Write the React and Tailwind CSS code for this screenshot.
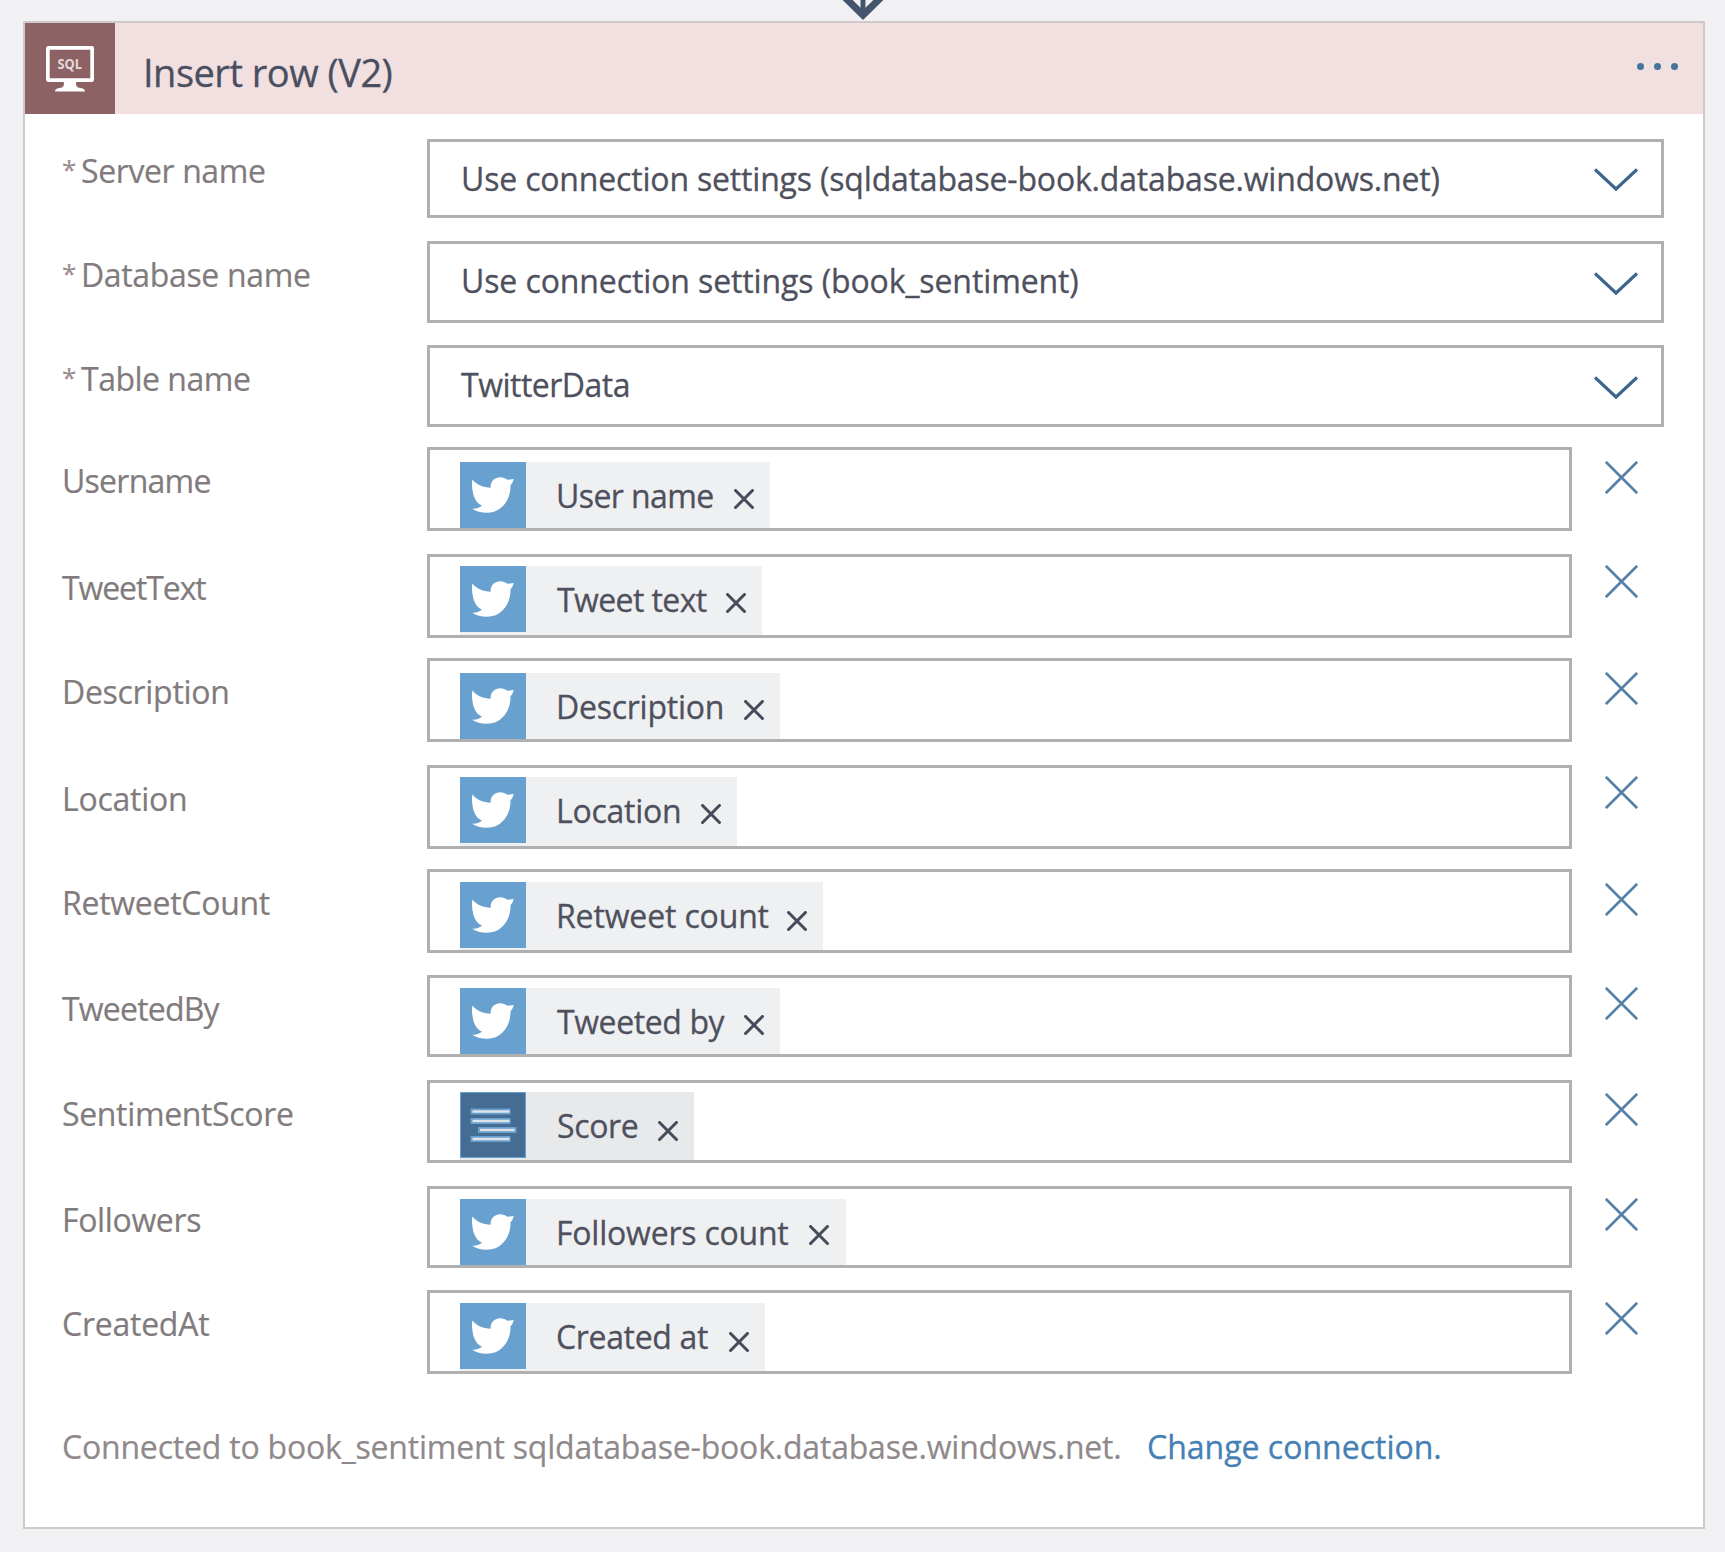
import React from "react";

const selects = [
  { label: "Server name", value: "Use connection settings (sqldatabase-book.database.windows.net)", row: "h-[79px]", labelCls: "pt-[12px] tracking-[-0.4px]", valueCls: "pt-[17px] tracking-[-0.18px]", chevron: "pt-[26px]" },
  { label: "Database name", value: "Use connection settings (book_sentiment)", row: "mt-[23px] h-[82px]", labelCls: "pt-[14px] tracking-[-0.35px]", valueCls: "pt-[17px] tracking-[-0.11px]", chevron: "pt-[28px]" },
  { label: "Table name", value: "TwitterData", row: "mt-[22px] h-[82px]", labelCls: "pt-[14px] tracking-[-0.5px]", valueCls: "pt-[17px] tracking-[-0.5px]", chevron: "pt-[28px]" },
];

const fields = [
  { label: "Username", chip: "User name", row: "mt-[20px] h-[84px]", labelCls: "tracking-[-0.75px]", chipCls: "mt-[12px] w-[310px]", text: "pl-[30px] tracking-[-0.6px]", x: "mt-[27px]", del: "mt-[14px]" },
  { label: "TweetText", chip: "Tweet text", row: "mt-[23px] h-[84px]", labelCls: "tracking-[-1.1px]", chipCls: "mt-[9px] w-[302px]", text: "pl-[31px] tracking-[-0.6px]", x: "mt-[27px]", del: "mt-[11px]" },
  { label: "Description", chip: "Description", row: "mt-[20px] h-[84px]", labelCls: "tracking-[-0.3px]", chipCls: "mt-[12px] w-[320px]", text: "pl-[30px] tracking-[-0.25px]", x: "mt-[27px]", del: "mt-[14px]" },
  { label: "Location", chip: "Location", row: "mt-[23px] h-[84px]", labelCls: "tracking-[-0.25px]", chipCls: "mt-[9px] w-[277px]", text: "pl-[30px] tracking-[-0.25px]", x: "mt-[27px]", del: "mt-[11px]" },
  { label: "RetweetCount", chip: "Retweet count", row: "mt-[20px] h-[84px]", labelCls: "tracking-[-0.28px]", chipCls: "mt-[10px] w-[363px]", text: "pl-[30px] tracking-[-0.15px]", x: "mt-[29px]", del: "mt-[14px]" },
  { label: "TweetedBy", chip: "Tweeted by", row: "mt-[22px] h-[82px]", labelCls: "tracking-[-0.8px]", chipCls: "mt-[10px] w-[320px]", text: "pl-[31px] tracking-[-0.4px]", x: "mt-[27px]", del: "mt-[12px]" },
  { label: "SentimentScore", chip: "Score", score: true, row: "mt-[23px] h-[83px]", labelCls: "tracking-[-0.35px]", chipCls: "mt-[9px] w-[234px]", text: "pl-[31px] tracking-[-0.35px]", x: "mt-[29px]", del: "mt-[13px]" },
  { label: "Followers", chip: "Followers count", row: "mt-[23px] h-[82px]", labelCls: "tracking-[-0.35px]", chipCls: "mt-[10px] w-[386px]", text: "pl-[30px] tracking-[-0.22px]", x: "mt-[26px] pr-px", del: "mt-[12px]" },
  { label: "CreatedAt", chip: "Created at", row: "mt-[22px] h-[84px]", labelCls: "tracking-[-0.25px]", chipCls: "mt-[10px] w-[305px]", text: "pl-[30px] tracking-[-0.35px]", x: "mt-[29px]", del: "mt-[12px]" },
];

function SqlMonitorIcon() {
  return (
    <svg width="48" height="46" viewBox="0 0 48 46" fill="none">
      <rect x="1.8" y="1.8" width="44.4" height="32.4" rx="1" stroke="#fff" strokeWidth="3.8" />
      <path d="M17.5 35h13c-1 3-.5 5 1.500 6.500 3.500.6 7 1 7 4H9c0-3 3.500-3.400 7-4 2-1.500 2.500-3.500 1.500-6.500Z" fill="#fff" />
      <text x="11.500" y="23.300" textLength="24.500" lengthAdjust="spacingAndGlyphs" fill="#e6d9da" fontFamily="Open Sans, sans-serif" fontWeight="700" fontSize="14.500">SQL</text>
    </svg>
  );
}

function BirdIcon() {
  return (
    <svg width="42" height="36" viewBox="0 0 42 36" fill="#fff">
      <path d="M.3 2.500C5 8 11 10.500 18.700 10.700 18 4.200 23 .2 28 .2c3 0 5.500 1 7.500 2.600l6.300-.9-1.600 4.300-1.700 2C39 22 30 35.700 15 35.700c-6 0-11-1.500-14.800-4C4.500 32 8 30.700 10 28.500 5 27 2 21 1 16 0 11-.4 7 .3 2.500Z" />
    </svg>
  );
}

function Cross({ size, color, width }) {
  return (
    <svg width={size} height={size} viewBox="0 0 32 32" fill="none" stroke={color} strokeWidth={width}>
      <path d="M.8.8 31.200 31.200M31.200.8.8 31.200" />
    </svg>
  );
}

function Chevron() {
  return (
    <svg width="44" height="24" viewBox="0 0 44 24" fill="none" stroke="#3d668f" strokeWidth="3.200">
      <path d="M1 1.500 22 21 43 1.500" />
    </svg>
  );
}

function ScoreIcon() {
  return (
    <svg className="shrink-0" width="66" height="66" viewBox="0 0 66 66">
      <rect width="66" height="66" fill="#68a0d0" />
      <rect x="1" y="1" width="64" height="64" fill="#456c92" />
      <g stroke="#68a0d0" strokeWidth="6">
        <path d="M10.500 19.500h40M10.500 29h40M18 38h38.500M10.500 47h40" />
      </g>
      <g stroke="#dde3e8" strokeWidth="2.400">
        <path d="M12.500 19.500h37M12.500 29h37M20 38h34.500M12.500 47h37" />
      </g>
    </svg>
  );
}

export default function App() {
  return (
    <div className="flex h-[1552px] w-[1725px] flex-col overflow-hidden bg-[#f1f1f3] pl-[23px] font-['Open_Sans',sans-serif] text-[32px] leading-[40px] whitespace-nowrap">
      <div className="h-[21px] pl-[816px]">
        <svg width="48" height="21" viewBox="0 0 48 21" fill="none" stroke="#43546b">
          <path d="M24 0v14" strokeWidth="5" />
          <path d="M4-4.500 24 15 44-4.500" strokeWidth="7" />
        </svg>
      </div>
      <div className="h-[1508px] w-[1682px] border-2 border-[#cfc9ca] bg-white">
        <div className="flex h-[91px] bg-[#f2e0e0]">
          <div className="flex w-[90px] justify-center bg-[#8c6265] pt-[23px]">
            <SqlMonitorIcon />
          </div>
          <div className="flex-1 pt-[25px] pl-[28px] text-[38px] leading-[48px] tracking-[-0.5px] text-[#4a4f5f] [-webkit-text-stroke:0.3px]">Insert row (V2)</div>
          <div className="flex gap-[10px] pt-[40px] pr-[25px]">
            <span className="size-[7px] rounded-full bg-[#45759f]" />
            <span className="size-[7px] rounded-full bg-[#45759f]" />
            <span className="size-[7px] rounded-full bg-[#45759f]" />
          </div>
        </div>
        <div className="pt-[25px] pl-[35px]">
          {selects.map((s) => (
            <div key={s.label} className={"flex " + s.row}>
              <div className={"flex w-[367px] text-[#817b7d] [-webkit-text-stroke:0.2px] " + s.labelCls}>
                <span className="w-[21px] pl-[2px] text-[26px] leading-[36px] text-[#9c8a8d]">*</span>
                <span>{s.label}</span>
              </div>
              <div className="flex w-[1237px] justify-between border-[3px] border-[#b0b0b0] pr-[23px] pl-[31px]">
                <span className={"text-[#4e505d] [-webkit-text-stroke:0.3px] " + s.valueCls}>{s.value}</span>
                <span className={s.chevron}>
                  <Chevron />
                </span>
              </div>
            </div>
          ))}
          {fields.map((f) => (
            <div key={f.label} className={"flex " + f.row}>
              <div className={"w-[367px] pt-[14px] pl-[2px] text-[#817b7d] [-webkit-text-stroke:0.2px] " + f.labelCls}>{f.label}</div>
              <div className="flex w-[1145px] border-[3px] border-[#b0b0b0] pl-[30px]">
                <div className={"flex " + (f.score ? "bg-[#e7e9eb] " : "bg-[#eff0f2] ") + f.chipCls}>
                  {f.score ? (
                    <ScoreIcon />
                  ) : (
                    <span className="flex size-[66px] shrink-0 items-center justify-center bg-[#68a0d0]">
                      <BirdIcon />
                    </span>
                  )}
                  <span className={"flex-1 pt-[14px] text-[#4e505d] [-webkit-text-stroke:0.3px] " + f.text}>{f.chip}</span>
                  <span className={"mr-[16px] " + f.x}>
                    <Cross size={20} color="#454b5b" width={4.8} />
                  </span>
                </div>
              </div>
              <div className={"ml-[33px] " + f.del}>
                <Cross size={33} color="#5581a8" width={2.6} />
              </div>
            </div>
          ))}
          <div className="mt-[53px] flex">
            <span className="w-[1087px] pl-[2px] tracking-[-0.2px] text-[#8f898b] [-webkit-text-stroke:0.2px]">Connected to book_sentiment sqldatabase-book.database.windows.net.</span>
            <span className="text-[#4480b4] [-webkit-text-stroke:0.3px]">Change connection.</span>
          </div>
        </div>
      </div>
    </div>
  );
}
